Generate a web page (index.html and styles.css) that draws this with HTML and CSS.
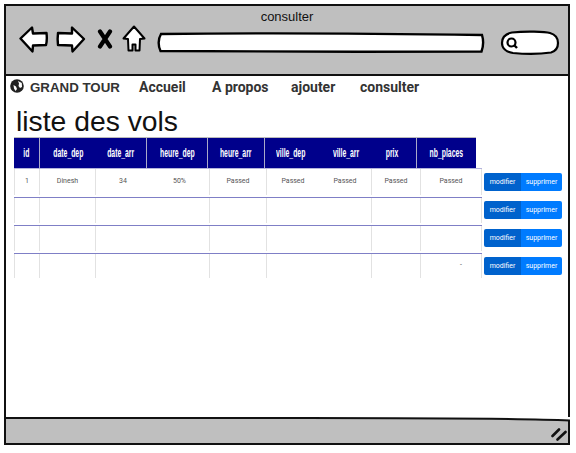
FILE: index.html
```html
<!DOCTYPE html>
<html lang="fr">
<head>
<meta charset="utf-8">
<title>consulter</title>
<link rel="stylesheet" href="styles.css">
</head>
<body>
<div class="window">
  <header class="chrome">
    <div class="chrome-title">consulter</div>
    <div class="toolbar">
      <svg class="tool tool-back" width="30" height="28" viewBox="0 0 30 28"><path d="M1.500 13.500 13 2.500l1 6 13.500-.5c.5 4 .5 8-.5 12l-13 .5-.5 6z" fill="#fff" stroke="#000" stroke-width="2.400" stroke-linejoin="round"/></svg>
      <svg class="tool tool-forward" width="30" height="28" viewBox="0 0 30 28"><path d="M28 14 16 2.500 16 8.500 2 8c-.5 4-.5 8 0 12l14 .5.500 6z" fill="#fff" stroke="#000" stroke-width="2.400" stroke-linejoin="round"/></svg>
      <svg class="tool tool-stop" width="16" height="20" viewBox="0 0 16 20"><path d="M3 2.500 13 17.500M13 2.500 3 17.500" fill="none" stroke="#000" stroke-width="4.200" stroke-linecap="round"/></svg>
      <svg class="tool tool-home" width="24" height="28" viewBox="0 0 24 28"><path d="M12 1.500 1.500 13.500l4.500.500.500 11.500h4v-6h3v6h4L18 14l4.500-.500z" fill="#fff" stroke="#000" stroke-width="2" stroke-linejoin="round"/></svg>
      <svg class="address" width="329" height="22" viewBox="0 0 329 22"><path d="M4 2C90 1 220 1.500 325 3c1.500 5 1.500 11-.5 16.500C220 20 90 19.500 3.500 19 1 14 1 7 4 2z" fill="#fff" stroke="#000" stroke-width="2.400"/></svg>
      <svg class="search" width="60" height="26" viewBox="0 0 60 26"><path d="M12 2.500C25 1 45 1.500 50 3c7 2 8 6 8 10s-2 8-7 9.500c-10 1.500-28 1.500-38 .5C6 22 2 18 2 13 2 8 5 4 12 2.500z" fill="#fff" stroke="#000" stroke-width="2.200"/><circle cx="11.500" cy="12.500" r="4" fill="none" stroke="#000" stroke-width="2.200"/><path d="m14 15 3 3" stroke="#000" stroke-width="2.400"/></svg>
    </div>
  </header>
  <main class="content">
    <nav class="nav">
      <svg class="globe" width="14" height="14" viewBox="0 0 14 14"><circle cx="7" cy="7" r="6.800" fill="#222"/><path d="M8 2 11.800 4 12 8 10 9 8.500 7 9 4.500zM3.500 6 6 7.500 7 10 5.500 12 4 9.500z" fill="#fff"/></svg>
      <span class="brand">GRAND TOUR</span>
      <a class="nav-link nav-accueil">Accueil</a>
      <a class="nav-link nav-apropos">A propos</a>
      <a class="nav-link nav-ajouter">ajouter</a>
      <a class="nav-link nav-consulter">consulter</a>
    </nav>
    <h1 class="page-title">liste des vols</h1>
    <div class="table-head">
      <div class="th c-id"><span class="th-text">id</span></div>
      <div class="th c-date-dep"><span class="th-text">date_dep</span></div>
      <div class="th c-date-arr sep"><span class="th-text">date_arr</span></div>
      <div class="th c-heure-dep sep"><span class="th-text">heure_dep</span></div>
      <div class="th c-heure-arr sep"><span class="th-text">heure_arr</span></div>
      <div class="th c-ville-dep"><span class="th-text">ville_dep</span></div>
      <div class="th c-ville-arr"><span class="th-text">ville_arr</span></div>
      <div class="th c-prix sep"><span class="th-text">prix</span></div>
      <div class="th c-nb"><span class="th-text">nb_places</span></div>
    </div>
    <div class="row row-first">
      <div class="cells">
        <div class="td">1</div><div class="td">Dinesh</div><div class="td split"><span>34</span><span>50%</span></div><div class="td">Passed</div><div class="td split"><span>Passed</span><span>Passed</span></div><div class="td">Passed</div><div class="td">Passed</div>
      </div>
      <div class="actions"><button class="btn edit">modifier</button><button class="btn del">supprimer</button></div>
    </div>
    <div class="row">
      <div class="cells">
        <div class="td"></div><div class="td"></div><div class="td"></div><div class="td"></div><div class="td"></div><div class="td"></div><div class="td"></div>
      </div>
      <div class="actions"><button class="btn edit">modifier</button><button class="btn del">supprimer</button></div>
    </div>
    <div class="row">
      <div class="cells">
        <div class="td"></div><div class="td"></div><div class="td"></div><div class="td"></div><div class="td"></div><div class="td"></div><div class="td"></div>
      </div>
      <div class="actions"><button class="btn edit">modifier</button><button class="btn del">supprimer</button></div>
    </div>
    <div class="row row-last">
      <div class="cells">
        <div class="td"></div><div class="td"></div><div class="td"></div><div class="td"></div><div class="td"></div><div class="td"></div><div class="td dot">-</div>
      </div>
      <div class="actions"><button class="btn edit">modifier</button><button class="btn del">supprimer</button></div>
    </div>
  </main>
  <footer class="status">
    <svg class="status-line" width="564" height="5" viewBox="0 0 564 5"><path d="M0 0H564V3C500 1 420 1 300 1H0z" fill="#fff"/><path d="M0 1H300C420 1 500 1 564 3.500" fill="none" stroke="#111" stroke-width="2"/></svg>
    <svg class="grip" width="16" height="13" viewBox="0 0 16 13"><path d="M1.500 8 8 1.500M6.500 11.500 14.500 4" fill="none" stroke="#111" stroke-width="2.600" stroke-linecap="round"/></svg>
  </footer>
</div>
</body>
</html>
```
FILE: styles.css
```css
* { box-sizing: border-box; }
html, body { margin: 0; padding: 0; background: #fff; }
body { width: 576px; height: 453px; padding: 4px 6px 8px 4px; font-family: "Liberation Sans", Arial, sans-serif; overflow: hidden; }
.window { width: 566px; height: 441px; border: 2px solid #111; display: flex; flex-direction: column; background: #fff; }
.chrome { height: 70px; background: #bfbfbf; border-bottom: 2px solid #111; flex: none; }
.chrome-title { font-size: 13px; line-height: 15px; text-align: center; padding-top: 3px; color: #111; height: 18px; }
.toolbar { display: flex; align-items: center; height: 34px; padding-left: 13px; }
.tool { flex: none; display: block; margin-bottom: 4px; }
.tool-forward { margin-left: 7px; }
.tool-stop { margin-left: 11px; }
.tool-home { margin-left: 9px; }
.address { margin: 4px 0 0 11px; flex: none; }
.search { margin: 4px 0 0 14px; flex: none; }
.content { flex: 1; }
.nav { display: flex; align-items: center; height: 22px; color: #333; font-weight: 700; font-size: 14px; padding-left: 4px; }
.globe { flex: none; margin-bottom: 3px; }
.brand { margin-left: 6px; width: 109px; font-size: 13.300px; }
.nav-link { font-family: "Roboto", sans-serif; }
.nav-accueil { width: 73px; }
.nav-apropos { width: 79px; }
.nav-ajouter { width: 69px; }
.page-title { margin: 0; font-weight: 400; font-size: 28.300px; line-height: 34px; color: #111; padding: 6px 0 0 10px; height: 40px; }
.table-head { width: 462px; height: 30px; margin-left: 8px; display: grid; grid-template-columns: 26px 56px 51px 61px 57px 52px 58px 42px 59px; background: #00008b; color: #fff; font-weight: 700; font-size: 12px; box-shadow: 0 -1px 0 #bbb; }
.th { display: flex; align-items: center; justify-content: center; white-space: nowrap; }
.th-text { display: inline-block; transform: scaleX(.57); }
.c-id { border-right: 1px solid #a9a9c9; }
.sep { border-right: 1px solid #a9a9c9; }
.c-prix { padding-right: 7px; }
.row { display: flex; height: 28px; margin-left: 8px; }
.row-first { height: 30px; }
.row-last { height: 26px; }
.cells { width: 468px; display: grid; grid-template-columns: 26px 56px 114px 57px 105px 49px 61px; border-bottom: 1px solid #7f7fc6; }
.row-first .cells { border-top: 1px solid #b4b4dc; }
.row-last .cells { border-bottom: 0; }
.td { font-family: "Roboto", sans-serif; font-size: 7px; color: #555; display: flex; align-items: center; justify-content: center; border-right: 1px solid #e2e2e2; padding-bottom: 3px; margin-bottom: 2px; }
.td:first-child { border-left: 1px solid #e2e2e2; }
.split { justify-content: space-around; }
.dot { justify-content: flex-end; padding-right: 19px; }
.actions { display: flex; margin: 3px 0 0 2px; height: 18px; }
.row-first .actions { margin-top: 5px; }
.btn { border: 0; padding: 0; margin: 0; height: 18px; color: #fff; font-family: "Roboto", sans-serif; font-size: 7px; }
.edit { width: 37px; background: #0062cc; border-radius: 2px 0 0 2px; }
.del { width: 41px; background: #007bff; border-radius: 0 2px 2px 0; }
.status { position: relative; height: 26px; background: #bfbfbf; flex: none; display: flex; justify-content: flex-end; align-items: flex-end; }
.status-line { position: absolute; left: 0; top: 0; display: block; }
.grip { margin: 0 1px 2px 0; display: block; }
```
